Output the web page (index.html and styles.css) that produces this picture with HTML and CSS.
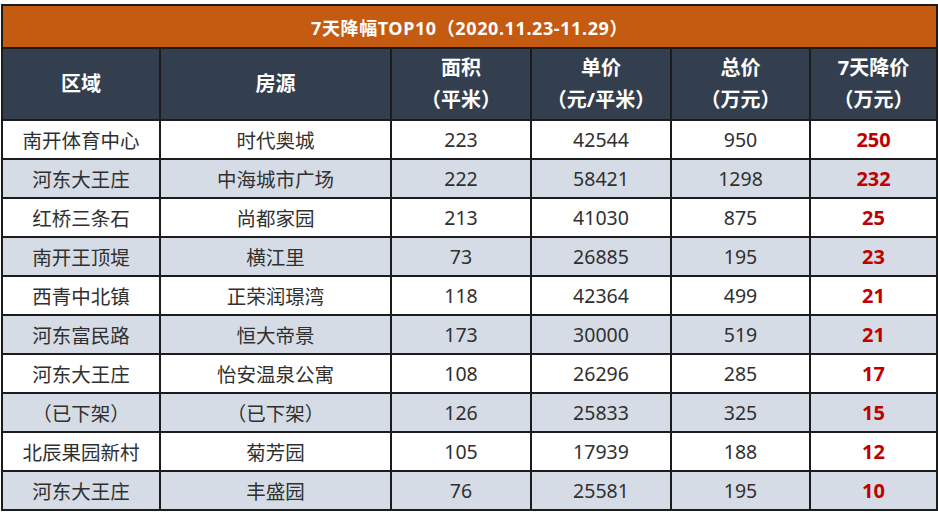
FILE: index.html
```html
<!DOCTYPE html>
<html lang="zh">
<head>
<meta charset="utf-8">
<link rel="stylesheet" href="styles.css">
</head>
<body>
<table class="rank">
  <colgroup>
    <col class="c1"><col class="c2"><col class="c3"><col class="c4"><col class="c5"><col class="c6">
  </colgroup>
  <thead>
    <tr class="title-row"><th colspan="6">7天降幅TOP10（2020.11.23-11.29）</th></tr>
    <tr class="head-row">
      <th>区域</th>
      <th>房源</th>
      <th>面积<br>（平米）</th>
      <th>单价<br>（元/平米）</th>
      <th>总价<br>（万元）</th>
      <th>7天降价<br>（万元）</th>
    </tr>
  </thead>
  <tbody>
    <tr><td>南开体育中心</td><td>时代奥城</td><td>223</td><td>42544</td><td>950</td><td class="drop">250</td></tr>
    <tr class="alt"><td>河东大王庄</td><td>中海城市广场</td><td>222</td><td>58421</td><td>1298</td><td class="drop">232</td></tr>
    <tr><td>红桥三条石</td><td>尚都家园</td><td>213</td><td>41030</td><td>875</td><td class="drop">25</td></tr>
    <tr class="alt"><td>南开王顶堤</td><td>横江里</td><td>73</td><td>26885</td><td>195</td><td class="drop">23</td></tr>
    <tr><td>西青中北镇</td><td>正荣润璟湾</td><td>118</td><td>42364</td><td>499</td><td class="drop">21</td></tr>
    <tr class="alt"><td>河东富民路</td><td>恒大帝景</td><td>173</td><td>30000</td><td>519</td><td class="drop">21</td></tr>
    <tr><td>河东大王庄</td><td>怡安温泉公寓</td><td>108</td><td>26296</td><td>285</td><td class="drop">17</td></tr>
    <tr class="alt"><td>（已下架）</td><td>（已下架）</td><td>126</td><td>25833</td><td>325</td><td class="drop">15</td></tr>
    <tr><td>北辰果园新村</td><td>菊芳园</td><td>105</td><td>17939</td><td>188</td><td class="drop">12</td></tr>
    <tr class="alt"><td>河东大王庄</td><td>丰盛园</td><td>76</td><td>25581</td><td>195</td><td class="drop">10</td></tr>
  </tbody>
</table>
</body>
</html>
```

FILE: styles.css
```css
html, body {
  margin: 0;
  padding: 0;
  background: #ffffff;
}

body {
  padding: 4px 0 0 1px;
  font-family: "Noto Sans", "Noto Sans CJK SC", sans-serif;
}

.rank {
  border-collapse: collapse;
  table-layout: fixed;
  width: 935px;
}

.c1 { width: 158px; }
.c2 { width: 231px; }
.c3 { width: 140px; }
.c4 { width: 140px; }
.c5 { width: 139px; }
.c6 { width: 127px; }

.rank th,
.rank td {
  border: 2px solid #1c1c1c;
  text-align: center;
  padding: 0;
}

.title-row th {
  background: #c55a11;
  color: #ffffff;
  font-size: 18px;
  letter-spacing: 0.6px;
  font-weight: 700;
  height: 41px;
}

.head-row th {
  background: #333f4f;
  color: #ffffff;
  font-size: 20px;
  font-weight: 700;
  line-height: 32px;
  height: 70px;
}

.rank td {
  height: 37px;
  font-size: 19.5px;
  color: #303030;
  background: #ffffff;
}

.rank tr.alt td {
  background: #d6dce5;
}

.rank td.drop {
  color: #c00000;
  font-weight: 700;
  font-size: 20px;
}
```
